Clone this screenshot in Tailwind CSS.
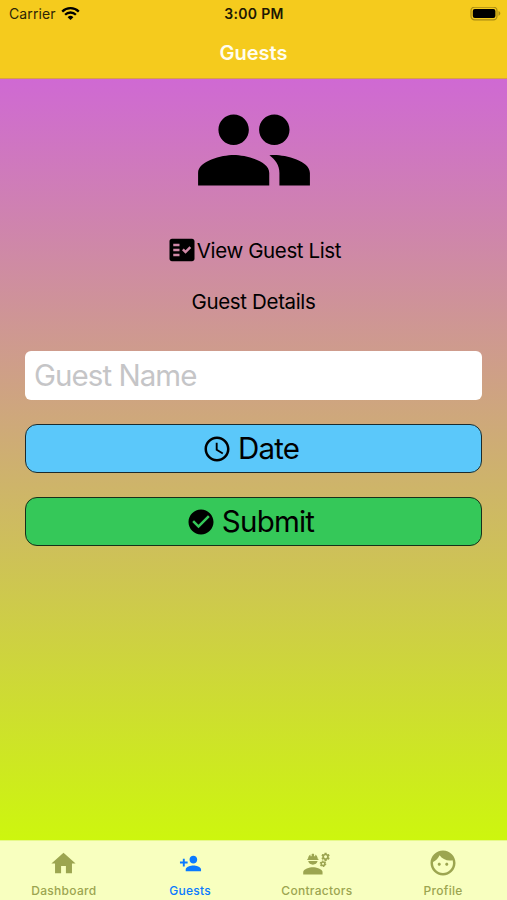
<!DOCTYPE html>
<html lang="en">

<head>
    <meta charset="UTF-8">
    <meta name="viewport" content="width=device-width, initial-scale=1.0">
    <title>Guests</title>
    <script src="https://cdn.jsdelivr.net/npm/@tailwindcss/browser@4"></script>
</head>

<body class="h-screen flex flex-col overflow-hidden font-[Inter,sans-serif] text-black">
    <!-- Header -->
    <header class="h-[79px] shrink-0 bg-[#f5cb1d] border-b border-[#d9a144]">
        <div class="h-[27px] grid grid-cols-3 items-center pl-[9px] pr-[6px] text-[14px]">
            <div class="flex items-center gap-[5px] text-[#2d2506]">
                <span class="tracking-[0.1px]">Carrier</span>
                <svg class="w-[19px] h-[14px] text-black" viewBox="0 0 19 14" fill="none" stroke="currentColor" stroke-width="2.3">
                    <path d="M1.2 4.6a11.8 11.8 0 0 1 16.6 0" />
                    <path d="M4.1 7.7a7.7 7.7 0 0 1 10.8 0" />
                    <path d="M9.5 13.1l-2.9-2.9a4.1 4.1 0 0 1 5.8 0z" fill="currentColor" stroke="none" />
                </svg>
            </div>
            <span class="pr-[2px] text-center font-semibold tracking-[0.3px] text-[#1d1803] whitespace-nowrap">3:00 PM</span>
            <svg class="justify-self-end w-[31px] h-[14px]" viewBox="0 0 31 14">
                <rect x="1" y=".2" width="26" height="12.6" rx="3.6" fill="none" stroke="#a98c14" stroke-width="1.2" />
                <rect x="2.8" y="1.9" width="22.6" height="9.2" rx="2" />
                <path d="M28.5 4.1c2.4.9 2.4 3.9 0 4.8z" fill="#a98c14" />
            </svg>
        </div>
        <h1 class="h-[51px] flex items-center justify-center text-[20px] font-semibold text-[#fffdf0]">Guests</h1>
    </header>

    <!-- Guest form -->
    <main class="flex-1 flex flex-col items-center px-[25px] bg-linear-to-b/srgb from-[#cf69d3] to-[#cdf60e]">
        <svg class="mt-[10px] w-[122px] h-[122px] shrink-0" viewBox="0 0 24 24">
            <path d="M16 11c1.66 0 2.99-1.34 2.99-3S17.66 5 16 5s-3 1.34-3 3 1.34 3 3 3zm-8 0c1.66 0 2.99-1.34 2.99-3S9.66 5 8 5 5 6.34 5 8s1.34 3 3 3zm0 2c-2.33 0-7 1.17-7 3.5V19h14v-2.5c0-2.33-4.67-3.5-7-3.5zm8 0c-.29 0-.62.02-.97.05 1.16.84 1.97 1.97 1.97 3.45V19h6v-2.5c0-2.33-4.67-3.5-7-3.5z" />
        </svg>
        <a class="mt-[24px] h-[30px] pl-px flex items-center text-[20.5px] tracking-[-0.38px] whitespace-nowrap" href="#">
            <svg class="w-[30px] h-[30px]" viewBox="0 0 24 24">
                <path fill-rule="evenodd" d="M20 3H4c-1.1 0-2 .9-2 2v14c0 1.1.9 2 2 2h16c1.1 0 2-.9 2-2V5c0-1.1-.9-2-2-2zM10 17H5v-2h5v2zm0-4H5v-2h5v2zm0-4H5V7h5v2zm4.82 6L12 12.16l1.41-1.41 1.41 1.42L17.99 9l1.42 1.42L14.82 15z" />
            </svg>
            <span class="pt-[2px]">View Guest List</span>
        </a>
        <h2 class="mt-[22px] h-[30px] flex items-center text-[20.5px] tracking-[-0.35px]">Guest Details</h2>
        <form class="mt-[34px] w-full flex flex-col gap-6">
            <input type="text" placeholder="Guest Name" class="h-[49px] w-full rounded-md bg-white px-[9px] pb-[2px] text-[29.5px] tracking-[-0.95px] placeholder:text-[#c5c5c7]" />
            <button type="button" class="h-[49px] flex items-center justify-center gap-[6px] rounded-xl border border-[#1c2b2c] bg-[#5bc8fa] pr-[6px] text-[29.5px] tracking-[-0.8px]">
                <svg class="w-[30px] h-[30px]" viewBox="0 0 24 24">
                    <path d="M11.99 2C6.47 2 2 6.48 2 12s4.47 10 9.99 10C17.52 22 22 17.52 22 12S17.52 2 11.99 2zM12 20c-4.42 0-8-3.58-8-8s3.58-8 8-8 8 3.58 8 8-3.58 8-8 8zm.5-13H11v6l5.25 3.15.75-1.23-4.5-2.67z" />
                </svg>
                <span>Date</span>
            </button>
            <button type="button" class="h-[49px] flex items-center justify-center gap-[6px] rounded-xl border border-[#18301a] bg-[#35c859] pr-[7px] text-[29.5px] tracking-[-0.8px]">
                <svg class="w-[30px] h-[30px]" viewBox="0 0 24 24">
                    <path d="M12 2C6.48 2 2 6.48 2 12s4.48 10 10 10 10-4.48 10-10S17.52 2 12 2zm-2 15l-5-5 1.41-1.41L10 14.17l7.59-7.59L19 8l-9 9z" />
                </svg>
                <span>Submit</span>
            </button>
        </form>
    </main>

    <!-- Tab bar -->
    <nav class="h-[60px] shrink-0 grid grid-cols-4 border-t border-[#e6f98a] bg-[#f8ffbf] text-[12px] font-medium tracking-[0.28px] text-[#9ca550]">
        <a class="flex flex-col items-center pl-px" href="#">
            <span class="h-[44px] flex items-center">
                <svg class="w-[29px] h-[29px]" viewBox="0 0 24 24" fill="currentColor">
                    <path d="M10 20v-6h4v6h5v-8h3L12 3 2 12h3v8z" />
                </svg>
            </span>
            <span class="leading-[12px]">Dashboard</span>
        </a>
        <a class="flex flex-col items-center text-[#0a7aff]" href="#">
            <span class="h-[44px] flex items-center">
                <svg class="w-[23px] h-[23px]" viewBox="0 0 24 24" fill="currentColor">
                    <path d="M15 12c2.21 0 4-1.79 4-4s-1.79-4-4-4-4 1.79-4 4 1.79 4 4 4zm-9-2V7H4v3H1v2h3v3h2v-3h3v-2H6zm9 4c-2.67 0-8 1.34-8 4v2h16v-2c0-2.66-5.33-4-8-4z" />
                </svg>
            </span>
            <span class="leading-[12px]">Guests</span>
        </a>
        <a class="flex flex-col items-center" href="#">
            <span class="h-[44px] flex items-center">
                <svg class="w-[29px] h-[29px]" viewBox="0 0 24 24" fill="currentColor">
                    <path d="M9 15c-2.67 0-8 1.34-8 4v2h16v-2c0-2.66-5.33-4-8-4z" />
                    <path d="M4.74 9h8.52c.27 0 .49-.22.49-.49v-.02c0-.27-.22-.49-.49-.49H13c0-1.48-.81-2.75-2-3.45v.95c0 .28-.22.5-.5.5s-.5-.22-.5-.5V4.14C9.68 4.06 9.35 4 9 4s-.68.06-1 .14V5.5c0 .28-.22.5-.5.5S7 5.78 7 5.5v-.95C5.81 5.25 5 6.52 5 8h-.26c-.27 0-.49.22-.49.49v.03c0 .26.22.48.49.48zM5.1 10c.4 1.8 2 3 3.9 3s3.5-1.2 3.9-3z" />
                    <path fill-rule="evenodd" d="M22.1 6.84c.01-.11.02-.22.02-.34 0-.12-.01-.23-.03-.34l.74-.58c.07-.05.08-.15.04-.22l-.7-1.21c-.04-.08-.14-.1-.21-.08l-.86.35c-.18-.14-.38-.25-.59-.34l-.13-.93c-.02-.09-.09-.15-.18-.15h-1.4c-.09 0-.16.06-.17.15l-.13.93c-.21.09-.41.21-.59.34l-.87-.35c-.08-.03-.17 0-.21.08l-.7 1.21c-.04.08-.03.17.04.22l.74.58c-.02.11-.03.23-.03.34 0 .11.01.23.03.34l-.74.58c-.07.05-.08.15-.04.22l.7 1.21c.04.08.14.1.21.08l.87-.35c.18.14.38.25.59.34l.13.93c.01.09.08.15.17.15h1.4c.09 0 .16-.06.17-.15l.13-.93c.21-.09.41-.21.59-.34l.87.35c.08.03.17 0 .21-.08l.7-1.21c.04-.08.03-.17-.04-.22l-.73-.58zM19.5 7.75c-.69 0-1.25-.56-1.25-1.25s.56-1.25 1.25-1.25 1.25.56 1.25 1.25-.56 1.25-1.25 1.25z" />
                    <circle cx="17.4" cy="12.2" r="1.5" fill="none" stroke="currentColor" stroke-width="1.3" />
                    <circle cx="17.4" cy="12.2" r="2.3" fill="none" stroke="currentColor" stroke-width=".9" stroke-dasharray="1.2 1.2" />
                </svg>
            </span>
            <span class="leading-[12px]">Contractors</span>
        </a>
        <a class="flex flex-col items-center pr-px" href="#">
            <span class="h-[44px] flex items-center">
                <svg class="w-[30px] h-[30px]" viewBox="0 0 24 24" fill="currentColor">
                    <path d="M9 11.75c-.69 0-1.25.56-1.25 1.25s.56 1.25 1.25 1.25 1.25-.56 1.25-1.25-.56-1.25-1.25-1.25zm6 0c-.69 0-1.25.56-1.25 1.25s.56 1.25 1.25 1.25 1.25-.56 1.25-1.25-.56-1.25-1.25-1.25zM12 2C6.48 2 2 6.48 2 12s4.48 10 10 10 10-4.48 10-10S17.52 2 12 2zm0 18c-4.41 0-8-3.59-8-8 0-.29.02-.58.05-.86 2.36-1.05 4.23-2.98 5.21-5.37C11.07 8.33 14.05 10 17.42 10c.78 0 1.53-.09 2.25-.26.21.71.33 1.47.33 2.26 0 4.41-3.59 8-8 8z" />
                </svg>
            </span>
            <span class="leading-[12px]">Profile</span>
        </a>
    </nav>
</body>

</html>
